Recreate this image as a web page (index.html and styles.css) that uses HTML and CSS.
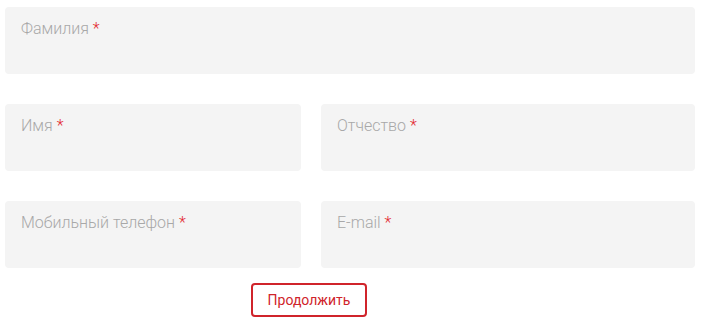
FILE: index.html
```html
<!DOCTYPE html>
<html lang="ru">
<head>
  <meta charset="UTF-8">
  <title>Анкета</title>
  <link rel="stylesheet" href="styles.css">
</head>
<body>
  <form class="form">
    <div class="form-row">
      <label class="field">
        <span class="field-label">Фамилия <span class="req">*</span></span>
        <input type="text" name="lastname">
      </label>
    </div>
    <div class="form-row two">
      <label class="field">
        <span class="field-label">Имя <span class="req">*</span></span>
        <input type="text" name="firstname">
      </label>
      <label class="field">
        <span class="field-label">Отчество <span class="req">*</span></span>
        <input type="text" name="middlename">
      </label>
    </div>
    <div class="form-row two">
      <label class="field">
        <span class="field-label">Мобильный телефон <span class="req">*</span></span>
        <input type="tel" name="phone">
      </label>
      <label class="field">
        <span class="field-label">E-mail <span class="req">*</span></span>
        <input type="email" name="email">
      </label>
    </div>
    <div class="form-buttons">
      <button type="button">Продолжить</button>
    </div>
  </form>
</body>
</html>
```

FILE: styles.css
```css
body {
  margin: 0;
  background: #fff;
  font-family: Roboto, "Liberation Sans", sans-serif;
}
.form {
  width: 690px;
  padding: 7px 0 0 5px;
}
.form-row {
  display: grid;
  grid-template-columns: 1fr;
  margin-bottom: 30px;
}
.form-row.two {
  grid-template-columns: 296px 374px;
  column-gap: 20px;
}
.form-row:nth-child(3) {
  margin-bottom: 15px;
}
.field {
  display: block;
  height: 67px;
  box-sizing: border-box;
  padding: 12px 16px 0;
  background: #f4f4f4;
  border-radius: 4px;
}
.field-label {
  display: block;
  font-size: 16px;
  line-height: 20px;
  font-weight: 300;
  color: #a8a8a8;
}
.req {
  color: #e3262e;
}
.field input {
  display: block;
  width: 100%;
  border: none;
  background: transparent;
  padding: 0;
  font: inherit;
  height: 20px;
  outline: none;
}
.form-buttons {
  padding-left: 246px;
}
.form-buttons button {
  width: 116px;
  height: 34px;
  padding: 0;
  background: #fff;
  border: 2px solid #d0242b;
  border-radius: 4px;
  color: #d0242b;
  font-family: Roboto, "Liberation Sans", sans-serif;
  font-size: 14px;
  cursor: pointer;
}
```
